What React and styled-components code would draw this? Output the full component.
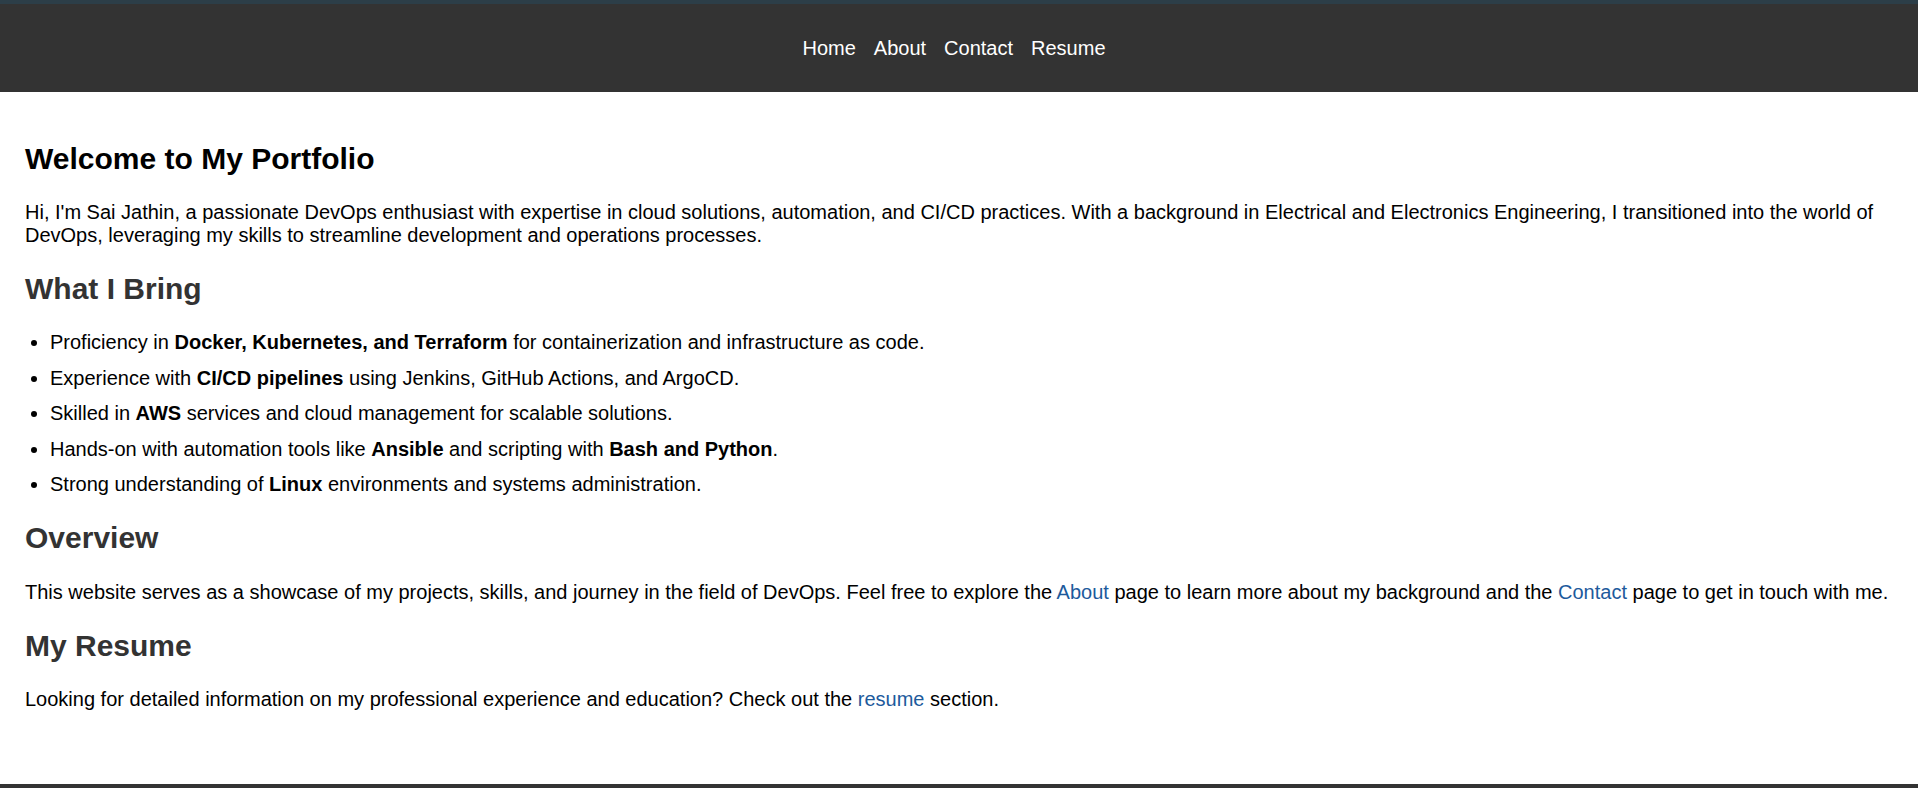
import React from "react";
import styled, { createGlobalStyle } from "styled-components";

const GlobalStyle = createGlobalStyle`
  html, body {
    margin: 0;
    padding: 0;
    background: #ffffff;
  }
  body {
    font-family: "Liberation Sans", Arial, sans-serif;
    font-size: 20px;
    color: #000000;
  }
`;

const Header = styled.header`
  background: #333333;
  border-top: 4px solid #2c3e48;
  padding: 33px 0 32px;
`;

const NavList = styled.nav`
  display: flex;
  justify-content: center;
  gap: 18px;
  padding-right: 10px;
`;

const NavLink = styled.a`
  color: #ffffff;
  text-decoration: none;
  font-size: 20px;
  line-height: 23px;
`;

const Main = styled.main`
  padding: 30px 25px 49px;
`;

const Title = styled.h1`
  font-size: 30px;
  font-weight: bold;
  color: #000000;
  margin: 20px 0 24px;
  line-height: 34.5px;
`;

const SectionTitle = styled.h2`
  font-size: 30px;
  font-weight: bold;
  color: #333333;
  margin: 25px 0;
  line-height: 34.5px;
`;

const Para = styled.p`
  margin: 24px 0;
  line-height: 23px;
`;

const List = styled.ul`
  margin: 24px 0;
  padding-left: 25px;
`;

const Item = styled.li`
  line-height: 23px;
  margin-bottom: 12.5px;
`;

const InlineLink = styled.a`
  color: #1d5a9c;
  text-decoration: none;
`;

const Footer = styled.footer`
  background: #333333;
  height: 60px;
`;

export default function App() {
  return (
    <>
      <GlobalStyle />
      <Header>
        <NavList>
          <NavLink href="#">Home</NavLink>
          <NavLink href="#">About</NavLink>
          <NavLink href="#">Contact</NavLink>
          <NavLink href="#">Resume</NavLink>
        </NavList>
      </Header>
      <Main>
        <Title>Welcome to My Portfolio</Title>
        <Para>
          Hi, I'm Sai Jathin, a passionate DevOps enthusiast with expertise in cloud solutions,
          automation, and CI/CD practices. With a background in Electrical and Electronics
          Engineering, I transitioned into the world of DevOps, leveraging my skills to streamline
          development and operations processes.
        </Para>
        <SectionTitle>What I Bring</SectionTitle>
        <List>
          <Item>
            Proficiency in <strong>Docker, Kubernetes, and Terraform</strong> for containerization
            and infrastructure as code.
          </Item>
          <Item>
            Experience with <strong>CI/CD pipelines</strong> using Jenkins, GitHub Actions, and
            ArgoCD.
          </Item>
          <Item>
            Skilled in <strong>AWS</strong> services and cloud management for scalable solutions.
          </Item>
          <Item>
            Hands-on with automation tools like <strong>Ansible</strong> and scripting with{" "}
            <strong>Bash and Python</strong>.
          </Item>
          <Item>
            Strong understanding of <strong>Linux</strong> environments and systems administration.
          </Item>
        </List>
        <SectionTitle>Overview</SectionTitle>
        <Para>
          This website serves as a showcase of my projects, skills, and journey in the field of
          DevOps. Feel free to explore the <InlineLink href="#">About</InlineLink> page to learn
          more about my background and the <InlineLink href="#">Contact</InlineLink> page to get in
          touch with me.
        </Para>
        <SectionTitle>My Resume</SectionTitle>
        <Para>
          Looking for detailed information on my professional experience and education? Check out
          the <InlineLink href="#">resume</InlineLink> section.
        </Para>
      </Main>
      <Footer />
    </>
  );
}
